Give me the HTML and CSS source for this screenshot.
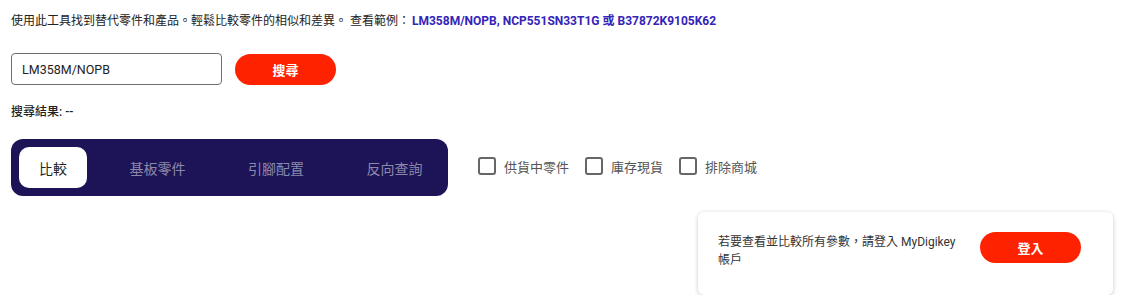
FILE: index.html
```html
<!DOCTYPE html>
<html lang="zh-Hant">
<head>
<meta charset="utf-8">
<link rel="stylesheet" href="styles.css">
</head>
<body>
<div class="page">
  <p class="intro">使用此工具找到替代零件和產品。輕鬆比較零件的相似和差異。 查看範例：<span class="links"><a href="#">LM358M/NOPB</a>, <a href="#">NCP551SN33T1G</a> 或 <a href="#">B37872K9105K62</a></span></p>
  <div class="search-row">
    <input class="search-input" type="text" value="LM358M/NOPB">
    <button class="btn">搜尋</button>
  </div>
  <p class="results">搜尋結果: --</p>
  <div class="controls">
    <div class="tabs">
      <div class="tab active">比較</div>
      <div class="tab">基板零件</div>
      <div class="tab">引腳配置</div>
      <div class="tab">反向查詢</div>
    </div>
    <div class="filters">
      <label class="check"><span class="box"></span>供貨中零件</label>
      <label class="check"><span class="box"></span>庫存現貨</label>
      <label class="check"><span class="box"></span>排除商城</label>
    </div>
  </div>
  <div class="card-row">
    <div class="card">
      <p class="card-text">若要查看並比較所有參數，請登入 MyDigikey 帳戶</p>
      <button class="btn login">登入</button>
    </div>
  </div>
</div>
</body>
</html>
```
FILE: styles.css
```css
* { box-sizing: border-box; }
html, body { margin: 0; padding: 0; background: #fff; }
body {
  font-family: Roboto, "Noto Sans CJK TC", "Noto Sans", sans-serif;
  color: #222;
}
.page { padding: 14px 16px 0 11px; }
.intro {
  margin: 0;
  font-size: 12px;
  line-height: 14px;
  color: #222;
}
.links { margin-left: 2px; font-weight: 700; color: #3424b8; }
.links a { color: #3424b8; text-decoration: none; }
.search-row {
  display: flex;
  align-items: center;
  gap: 13px;
  margin-top: 25px;
}
.search-input {
  width: 211px;
  height: 32px;
  border: 1px solid #6f6f6f;
  border-radius: 4px;
  padding: 0 10px;
  font-family: Roboto, "Noto Sans CJK TC", sans-serif;
  font-size: 12.5px;
  color: #222;
  outline: none;
}
.btn {
  width: 101px;
  height: 31px;
  border: none;
  border-radius: 16px;
  background: #ff2200;
  color: #fff;
  font-family: Roboto, "Noto Sans CJK TC", sans-serif;
  font-weight: 700;
  font-size: 13px;
  cursor: pointer;
}
.results {
  margin: 19px 0 0;
  font-size: 12px;
  line-height: 16px;
  font-weight: 500;
}
.controls {
  display: flex;
  align-items: center;
  gap: 30px;
  margin-top: 19px;
}
.tabs {
  display: flex;
  flex-shrink: 0;
  gap: 22.5px;
  width: 437px;
  height: 57px;
  padding: 8px;
  background: #1c1457;
  border-radius: 12px;
}
.tab {
  display: flex;
  align-items: center;
  flex-shrink: 0;
  white-space: nowrap;
  padding: 0 20px;
  border-radius: 10px;
  font-size: 14px;
  color: #8c88aa;
}
.tab.active { background: #fff; color: #222; }
.filters { display: flex; align-items: center; gap: 16px; margin-top: -3px; }
.check {
  display: flex;
  align-items: center;
  gap: 8px;
  font-size: 13px;
  color: #555;
  white-space: nowrap;
}
.box {
  width: 18px;
  height: 18px;
  border: 2px solid #666;
  border-radius: 3px;
}
.card-row { display: flex; justify-content: flex-end; margin-top: 16px; }
.card {
  width: 415px;
  height: 83px;
  display: flex;
  align-items: flex-start;
  justify-content: space-between;
  padding: 21px 32px 0 20px;
  background: #fff;
  border-radius: 6px;
  box-shadow: 0 1px 4px rgba(0,0,0,0.22);
}
.card-text {
  margin: 0;
  width: 240px;
  font-size: 12px;
  line-height: 18px;
  color: #333;
}
.login { margin-top: -1px; }
```
